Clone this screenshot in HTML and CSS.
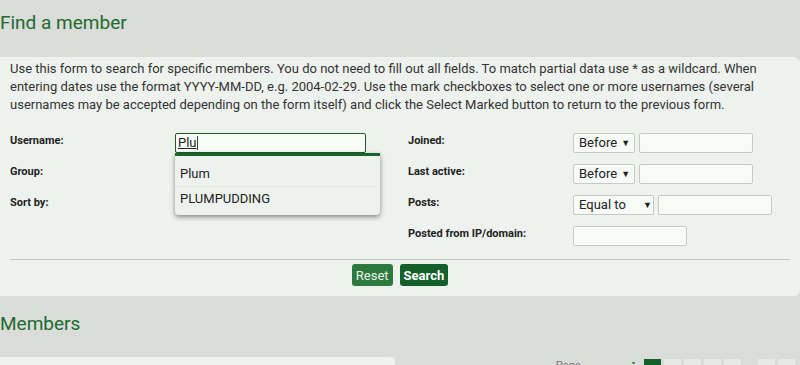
FILE: index.html
```html
<!DOCTYPE html>
<html lang="en">
<head>
  <meta charset="UTF-8">
  <title>Find a member</title>
  <link rel="stylesheet" href="styles.css">
</head>
<body>
  <h2 class="page-title">Find a member</h2>

  <div class="panel">
    <p class="intro">Use this form to search for specific members. You do not need to fill out all fields. To match partial data use * as a wildcard. When entering dates use the format YYYY-MM-DD, e.g. 2004-02-29. Use the mark checkboxes to select one or more usernames (several usernames may be accepted depending on the form itself) and click the Select Marked button to return to the previous form.</p>

    <div class="fields">
      <div class="column">
        <div class="row">
          <label>Username:</label>
          <div class="field">
            <div class="inputbox active"><span class="typed">Plu</span><span class="caret"></span></div>
            <ul class="suggest">
              <li>Plum</li>
              <li>PLUMPUDDING</li>
            </ul>
          </div>
        </div>
        <div class="row"><label>Group:</label></div>
        <div class="row"><label>Sort by:</label></div>
      </div>

      <div class="column">
        <div class="row">
          <label>Joined:</label>
          <div class="field">
            <span class="select">Before <b>▼</b></span>
            <span class="inputbox short"></span>
          </div>
        </div>
        <div class="row">
          <label>Last active:</label>
          <div class="field">
            <span class="select">Before <b>▼</b></span>
            <span class="inputbox short"></span>
          </div>
        </div>
        <div class="row">
          <label>Posts:</label>
          <div class="field">
            <span class="select wide">Equal to <b>▼</b></span>
            <span class="inputbox short"></span>
          </div>
        </div>
        <div class="row">
          <label>Posted from IP/domain:</label>
          <div class="field">
            <span class="inputbox short"></span>
          </div>
        </div>
      </div>
    </div>

    <hr class="divider">

    <div class="actions">
      <button class="btn reset">Reset</button>
      <button class="btn search">Search</button>
    </div>
  </div>

  <h2 class="page-title members">Members</h2>

  <div class="bottom">
    <div class="bottom-box"></div>
    <div class="pagination">
      <span class="page-info">Page</span>
      <span class="dot">•</span>
      <span class="pg current"></span>
      <span class="pg"></span>
      <span class="pg"></span>
      <span class="pg"></span>
      <span class="pg"></span>
      <span class="pg gap"></span>
      <span class="pg"></span>
    </div>
  </div>
</body>
</html>
```

FILE: styles.css
```css
body {
  margin: 0;
  background: #d9dcd8;
  font-family: Roboto, "Liberation Sans", sans-serif;
  color: #333;
}
.page-title {
  margin: 0;
  padding: 10px 0 0 0;
  height: 57px;
  box-sizing: border-box;
  font-size: 19px;
  font-weight: normal;
  line-height: 26px;
  color: #1d6a2f;
}
.panel {
  background: #eef2ee;
  border-radius: 0 6px 6px 0;
  padding: 3px 10px 10px 10px;
}
.intro {
  margin: 0;
  font-size: 13px;
  line-height: 18px;
  color: #333;
}
.fields {
  display: flex;
  margin-top: 19px;
}
.column {
  width: 398px;
}
.column + .column {
  width: 382px;
}
.row {
  display: flex;
  height: 20px;
  margin-bottom: 11px;
}
.row label {
  width: 165px;
  flex: none;
  font-size: 11px;
  font-weight: bold;
  line-height: 15px;
  color: #222;
}
.field {
  position: relative;
  display: flex;
  gap: 4px;
}
.inputbox {
  display: block;
  box-sizing: border-box;
  height: 20px;
  border: 1px solid #c6c9c6;
  border-radius: 2px;
  background: #f7faf7;
}
.inputbox.active {
  width: 191px;
  border-color: #1c5a2a;
  background: #f8fcf8;
  padding: 1px 2px;
  font-size: 13px;
  line-height: 16px;
  color: #222;
}
.inputbox.short {
  width: 114px;
}
.typed {
  text-decoration: underline;
}
.caret {
  display: inline-block;
  width: 1px;
  height: 14px;
  background: #444;
  vertical-align: -3px;
}
.suggest {
  position: absolute;
  top: 20px;
  left: 0;
  width: 205px;
  margin: 0;
  padding: 6px 0 4px;
  list-style: none;
  background: #eef2ee;
  border-top: 3px solid #17642b;
  border-radius: 0 0 4px 4px;
  box-shadow: 0 2px 5px rgba(0, 0, 0, 0.45);
  box-sizing: border-box;
  font-size: 13px;
  line-height: 24px;
  color: #222;
}
.suggest li {
  margin: 0 4px 0 0;
  padding: 0 5px;
}
.suggest li + li {
  border-top: 1px dotted #d4d8d4;
}
.select {
  display: block;
  box-sizing: border-box;
  width: 62px;
  height: 20px;
  padding: 0 0 0 5px;
  border: 1px solid #c6c9c6;
  border-radius: 2px;
  background: #f7faf7;
  font-size: 13px;
  line-height: 18px;
  color: #222;
  white-space: nowrap;
}
.select b {
  font-size: 9px;
  margin-left: 1px;
  vertical-align: 1px;
}
.select.wide {
  width: 81px;
}
.select.wide b {
  margin-left: 14px;
}
.divider {
  border: 0;
  border-top: 1px solid #c3c7c3;
  margin: 2px 0 4px;
}
.actions {
  display: flex;
  justify-content: center;
  gap: 7px;
}
.btn {
  height: 22px;
  border: 0;
  border-radius: 3px;
  padding: 0 4px;
  font-family: Roboto, "Liberation Sans", sans-serif;
  font-size: 13px;
  color: #eef5ee;
}
.btn.reset {
  background: #2c7a3d;
}
.btn.search {
  background: #14602a;
  font-weight: bold;
  color: #fff;
}
.members {
  margin-top: 0;
  padding-top: 15px;
  height: 61px;
}
.bottom {
  display: flex;
  justify-content: space-between;
}
.bottom-box {
  width: 395px;
  height: 20px;
  background: #eef2ee;
  border-radius: 0 5px 0 0;
}
.pagination {
  display: flex;
  align-items: flex-start;
  padding-top: 2px;
  padding-right: 5px;
  gap: 3px;
}
.page-info {
  font-size: 11px;
  color: #777;
  margin-right: 48px;
}
.dot {
  font-size: 10px;
  line-height: 10px;
  color: #1d6a2f;
  margin-right: 6px;
}
.pg {
  width: 17px;
  height: 17px;
  background: #e6e9e6;
}
.pg.current {
  background: #14602a;
}
.pg.gap {
  margin-left: 14px;
}
```
